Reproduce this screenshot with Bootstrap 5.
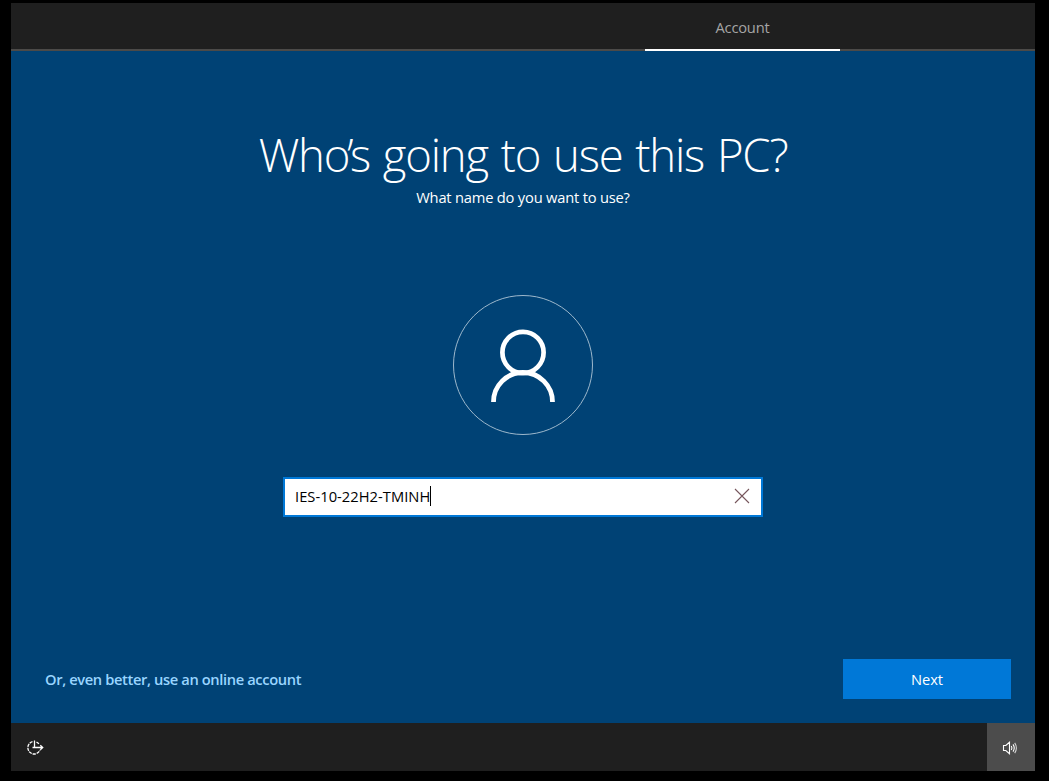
<!DOCTYPE html>
<html lang="en">
<head>
<meta charset="utf-8">
<meta name="viewport" content="width=device-width, initial-scale=1">
<title>Account setup</title>
<link href="https://cdn.jsdelivr.net/npm/bootstrap@5.3.0/dist/css/bootstrap.min.css" rel="stylesheet">
<style>
  body { background: #000; font-family: "Open Sans", "Noto Sans", sans-serif; font-size: 14.7px; line-height: 20px; overflow: hidden; }
  .oobe { width: 1024px; height: 768px; margin: 3px 0 0 11px; background: #004275; }
  .oobe-tabs { height: 48px; background: #1f1f1f; border-bottom: 2px solid #4c4a48; padding-left: 634px; }
  .oobe-tab { width: 195px; height: 48px; border-bottom: 2px solid #fff; color: #a5a5a5; padding-top: 2px; }
  .oobe-title { font-size: 45.5px; font-weight: 300; line-height: 60px; padding-top: 73px; }
  .oobe-sub { margin-top: 3px; }
  .avatar { margin-top: 88px; }
  .name-box { width: 480px; height: 40px; margin-top: 42px; border: 2px solid #0078d7; background: #fff; color: #000; padding: 0 11px 2px 10px; }
  .caret { width: 1px; height: 20px; background: #000; }
  .oobe-actions { padding: 0 24px 24px 34px; }
  .online-link { color: #99d5ff; font-weight: 600; }
  .btn-next { width: 168px; height: 40px; background: #0078d7; color: #fff; font-size: 14.7px; line-height: 20px; }
  .oobe-footer { height: 48px; background: #1f1f1f; }
  .reset-icon { margin: 2px 0 0 15px; }
  .volume { width: 48px; height: 48px; background: #4c4c4c; padding: 2px 2px 0 0; }
  .t { display: inline-block; white-space: nowrap; }
  .t-tab { letter-spacing: -.2px; }
  .t-title { letter-spacing: -1.2px; word-spacing: 2.2px; }
  .t-apos { letter-spacing: -3.5px; }
  .t-sub { letter-spacing: -.2px; }
  .t-name { letter-spacing: .04px; }
  .t-link { letter-spacing: -.38px; }
</style>
</head>
<body>
<main class="oobe d-flex flex-column">
  <nav class="oobe-tabs d-flex">
    <div class="oobe-tab d-flex align-items-center justify-content-center"><span class="t t-tab">Account</span></div>
  </nav>
  <section class="flex-grow-1 d-flex flex-column align-items-center text-white">
    <h1 class="oobe-title mb-0"><span class="t t-title">Wh<span class="t-apos">o’</span>s going to use this PC?</span></h1>
    <p class="oobe-sub mb-0"><span class="t t-sub">What name do you want to use?</span></p>
    <svg class="avatar flex-shrink-0" width="140" height="140" viewBox="0 0 140 140" fill="none" stroke="#fff">
      <circle cx="70" cy="70" r="69.5" stroke="#9db8cc"/>
      <circle cx="70" cy="57.5" r="20.6" stroke-width="4.7"/>
      <path d="M40.5 107a29.5 29.5 0 0 1 59 0" stroke-width="4.8"/>
    </svg>
    <div class="name-box d-flex align-items-center">
      <span class="t t-name">IES-10-22H2-TMINH</span><span class="caret"></span>
      <svg class="ms-auto" width="16" height="16" viewBox="0 0 16 16" stroke="#76565c" stroke-width="1.1"><path d="M1 1l14 14M15 1L1 15"/></svg>
    </div>
    <div class="oobe-actions w-100 mt-auto d-flex align-items-center justify-content-between">
      <a class="online-link text-decoration-none" href="#"><span class="t t-link">Or, even better, use an online account</span></a>
      <button class="btn btn-next rounded-0 border-0 p-0" type="button"><span class="t t-next">Next</span></button>
    </div>
  </section>
  <footer class="oobe-footer d-flex align-items-center justify-content-between">
    <svg class="reset-icon" width="18" height="18" viewBox="0 0 18 18" fill="none" stroke="#fff" stroke-width="1.3">
      <path d="M6.500 2.600A6.300 6.300 0 1 0 14 11" stroke-dasharray="3.200 .9"/>
      <path d="M8.500 1.500v7h8M14.300 6.300l2.400 2.200-2.400 2.200M6.500 8.500h2M10.500 3l2.500 1.700"/>
    </svg>
    <div class="volume d-flex align-items-center justify-content-center">
      <svg width="16" height="16" viewBox="0 0 16 16" fill="none" stroke="#fff" stroke-width="1.1">
        <path d="M1.500 5.500h2.300L7.500 2.300v11.400L3.800 10.500H1.500zM9.300 6q1.300 2 0 4M11 4.400q2.500 3.600 0 7.200"/>
        <path d="M12.700 2.900q3.400 5.100 0 10.200" opacity=".75"/>
      </svg>
    </div>
  </footer>
</main>
<script src="https://cdn.jsdelivr.net/npm/bootstrap@5.3.0/dist/js/bootstrap.bundle.min.js"></script>
</body>
</html>
